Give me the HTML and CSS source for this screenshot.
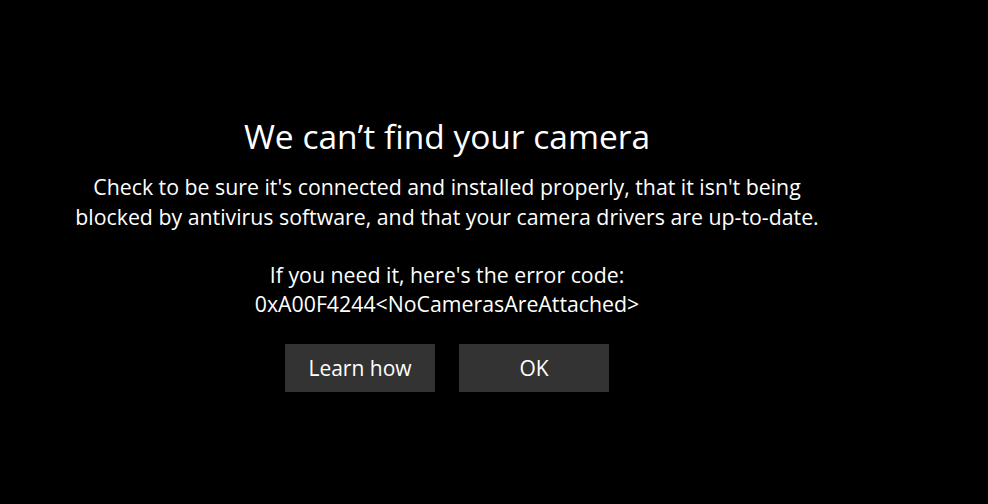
FILE: index.html
```html
<!DOCTYPE html>
<html>
<head>
<meta charset="utf-8">
<link rel="stylesheet" href="styles.css">
</head>
<body>
<main class="dialog">
  <h1 class="title">We can’t find your camera</h1>
  <p class="message">Check to be sure it's connected and installed properly, that it isn't being<br>blocked by antivirus software, and that your camera drivers are up-to-date.</p>
  <p class="code">If you need it, here's the error code:<br>0xA00F4244&lt;NoCamerasAreAttached&gt;</p>
  <div class="actions">
    <button class="btn">Learn how</button>
    <button class="btn">OK</button>
  </div>
</main>
</body>
</html>
```
FILE: styles.css
```css
html, body {
  margin: 0;
  padding: 0;
  background: #000;
  height: 100%;
}
body {
  font-family: "Open Sans", "Noto Sans", sans-serif;
  color: #fff;
}
.dialog {
  width: 894px;
  padding-top: 114px;
  display: flex;
  flex-direction: column;
  align-items: center;
  text-align: center;
}
.title {
  margin: 0;
  font-weight: 400;
  font-size: 33.5px;
  line-height: 44px;
}
.message {
  margin: 14px 0 0 0;
  font-size: 21.3px;
  line-height: 30px;
}
.code {
  margin: 28px 0 0 0;
  font-size: 21.3px;
  line-height: 29px;
}
.actions {
  margin-top: 26px;
  display: flex;
  gap: 24px;
}
.btn {
  width: 150px;
  height: 48px;
  border: 0;
  background: #333;
  color: #fff;
  font-family: inherit;
  font-size: 21px;
  padding: 0;
}
```
